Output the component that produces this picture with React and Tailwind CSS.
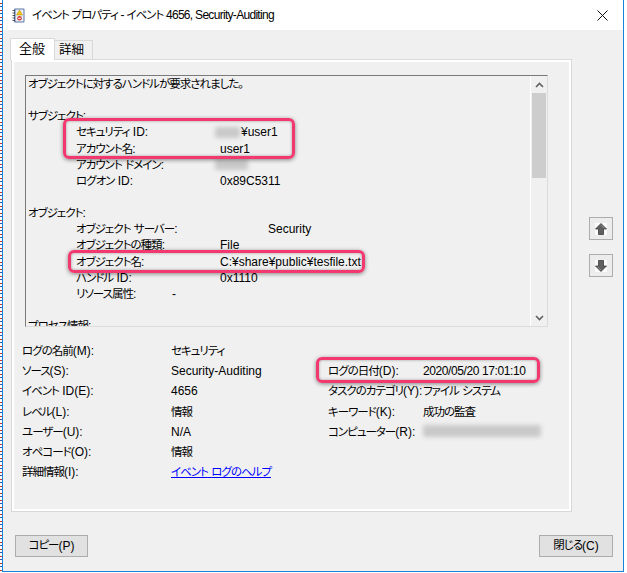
import React from "react";

const CJK = /([\u3000-\u30ff\u4e00-\u9fff\uff00-\uff5e]+)/;

const T = ({ s }) => {
  if (typeof s !== "string") return s;
  const parts = s.split(CJK);
  return (
    <>
      {parts.map((p, i) =>
        i % 2 === 1 ? (
          <span key={i} className="text-[11.5px] tracking-[-1px]">{p}</span>
        ) : (
          <span key={i}>{p}</span>
        )
      )}
    </>
  );
};

const Ln = ({ children }) => (
  <div className="h-[16.15px] leading-[16.15px] whitespace-nowrap flex items-center">
    <T s={children} />
  </div>
);

const Item = ({ label, lw = 144, children }) => (
  <div className="h-[16.15px] leading-[16.15px] whitespace-nowrap flex items-center">
    <span className="w-[48px] shrink-0" />
    <span className="shrink-0" style={{ width: lw }}><T s={label} /></span>
    <span className="flex items-center"><T s={children} /></span>
  </div>
);

const Blur = ({ cls }) => <span className={`inline-block bg-[#c9c9c9] blur-[2px] rounded-[2px] ${cls}`} />;

const Row = ({ a, b, c, d }) => (
  <>
    <div className="whitespace-nowrap"><T s={a} /></div>
    <div className="whitespace-nowrap"><T s={b} /></div>
    <div className="whitespace-nowrap"><T s={c} /></div>
    <div className="whitespace-nowrap"><T s={d} /></div>
  </>
);

const BlockArrow = ({ down }) => (
  <svg width="14" height="14" viewBox="0 0 14 14" className={down ? "rotate-180" : ""}>
    <rect x="1" y="1" width="12" height="12" fill="#fbfbfb" />
    <path d="M7 1.5 L12.5 7 L9.5 7 L9.5 12.5 L4.5 12.5 L4.5 7 L1.5 7 Z" fill="#5f5f5f" stroke="#3c3c3c" strokeWidth="0.8" />
    <path d="M7 2.8 L10.5 6.3" stroke="#9a9a9a" strokeWidth="0.8" />
  </svg>
);

export default function App() {
  return (
    <div className="relative w-[627px] h-[573px] bg-white overflow-hidden text-[12px] text-black font-['Liberation_Sans','Noto_Sans_CJK_JP',sans-serif] [font-feature-settings:'palt']">
      <div className="flex h-[572px]">
        <div className="w-[2px] h-full bg-[repeating-linear-gradient(180deg,#ffffff_0px,#ffffff_3px,#c0392b_3px,#c0392b_4px,#ffffff_4px,#ffffff_6px,#3455a8_6px,#3455a8_7px)]" />
        <div className="w-[622px] h-full flex flex-col border-l border-r border-b border-[#1883d7]">
          {/* title bar */}
          <div className="h-[30px] bg-white flex items-center pl-[9px] pr-[6px] shrink-0">
            <svg width="13" height="15" viewBox="0 0 13 15" className="shrink-0">
              <rect x="2" y="0.5" width="10.5" height="14" rx="1" fill="#5d77a6" />
              <rect x="3.5" y="1.5" width="8" height="12" fill="#e9eef7" />
              <path d="M7.5 2 L10.5 7 L4.5 7 Z" fill="#f3c212" stroke="#b88a00" strokeWidth="0.5" />
              <circle cx="7.5" cy="10.3" r="2.3" fill="#d33a2f" />
              <rect x="6.2" y="9.8" width="2.6" height="1" fill="#fff" />
              <g stroke="#333" strokeWidth="0.8">
                <line x1="0.5" y1="2.5" x2="3" y2="2.5" />
                <line x1="0.5" y1="5" x2="3" y2="5" />
                <line x1="0.5" y1="7.5" x2="3" y2="7.5" />
                <line x1="0.5" y1="10" x2="3" y2="10" />
                <line x1="0.5" y1="12.5" x2="3" y2="12.5" />
              </g>
            </svg>
            <div className="ml-[7px] text-[12px] tracking-[-0.7px] whitespace-nowrap"><T s="イベント プロパティ - イベント 4656, Security-Auditing" /></div>
            <div className="ml-auto w-[30px] h-[30px] flex items-center justify-center">
              <svg width="11" height="11" viewBox="0 0 11 11">
                <path d="M0.5 0.5 L10.5 10.5 M10.5 0.5 L0.5 10.5" stroke="#111" strokeWidth="1" />
              </svg>
            </div>
          </div>

          {/* body */}
          <div className="flex-1 bg-[#f0f0f0] flex flex-col">
            <div className="flex">
              <div className="flex flex-col">
                {/* tabs */}
                <div className="relative z-10 flex items-end h-[22px] mt-[8px] ml-[7px]">
                  <div className="h-[22px] w-[45px] bg-white border-t border-l border-r border-[#d9d9d9] flex items-center pl-[8px] pb-[1px] text-[13px]">全般</div>
                  <div className="h-[20px] w-[38px] bg-[#f0f0f0] border-t border-r border-b border-[#d9d9d9] flex items-center pl-[4px] text-[12.5px]">詳細</div>
                </div>
                {/* panel */}
                <div className="-mt-px ml-[8px] w-[561px] h-[453px] border border-[#d9d9d9]">
                  <div className="w-full h-full border-2 border-white flex flex-col">
                    {/* edit box */}
                    <div className="mt-[13px] ml-[11px] w-[523px] h-[252px] border-t border-l border-[#7a7a7a] border-r border-b border-r-[#dcdcdc] border-b-[#dcdcdc] flex">
                      <div className="flex-1 overflow-hidden pl-[2px]">
                        <Ln>オブジェクトに対するハンドルが要求されました。</Ln>
                        <Ln>&nbsp;</Ln>
                        <Ln>サブジェクト:</Ln>
                        <Item label="セキュリティ ID:" lw={139}><Blur cls="w-[25px] h-[11px]" /><span className="ml-[1px]">¥user1</span></Item>
                        <Item label="アカウント名:">user1</Item>
                        <Item label="アカウント ドメイン:" lw={139}><Blur cls="w-[33px] h-[11px]" /></Item>
                        <Item label="ログオン ID:">0x89C5311</Item>
                        <Ln>&nbsp;</Ln>
                        <Ln>オブジェクト:</Ln>
                        <Item label="オブジェクト サーバー:" lw={192}>Security</Item>
                        <Item label="オブジェクトの種類:">File</Item>
                        <Item label="オブジェクト名:">C:¥share¥public¥tesfile.txt</Item>
                        <Item label="ハンドル ID:">0x1110</Item>
                        <Item label="リソース属性:" lw={96}>-</Item>
                        <Ln>&nbsp;</Ln>
                        <Ln>プロセス情報:</Ln>
                      </div>
                      {/* scrollbar */}
                      <div className="w-[17px] h-full border-l border-white bg-[#f0f0f0] flex flex-col">
                        <div className="h-[17px] flex items-center justify-center">
                          <svg width="9" height="6" viewBox="0 0 9 6"><path d="M1 5 L4.5 1.5 L8 5" fill="none" stroke="#606060" strokeWidth="1.6" /></svg>
                        </div>
                        <div className="h-[85px] mx-[1px] bg-[#cdcdcd]" />
                        <div className="flex-1" />
                        <div className="h-[17px] flex items-center justify-center">
                          <svg width="9" height="6" viewBox="0 0 9 6"><path d="M1 1 L4.5 4.5 L8 1" fill="none" stroke="#606060" strokeWidth="1.6" /></svg>
                        </div>
                      </div>
                    </div>

                    {/* fields */}
                    <div className="mt-[14px] pl-[8px] grid grid-cols-[149px_157px_95px_1fr] auto-rows-[20.2px] items-center">
                      <Row a="ログの名前(M):" b="セキュリティ" c="" d="" />
                      <Row a="ソース(S):" b="Security-Auditing" c="ログの日付(D):" d={<span className="tracking-[-0.4px]">2020/05/20 17:01:10</span>} />
                      <Row a="イベント ID(E):" b="4656" c="タスクのカテゴリ(Y):" d="ファイル システム" />
                      <Row a="レベル(L):" b="情報" c="キーワード(K):" d="成功の監査" />
                      <Row a="ユーザー(U):" b="N/A" c="コンピューター(R):" d={<Blur cls="w-[118px] h-[12px] mt-[3px]" />} />
                      <Row a="オペコード(O):" b="情報" c="" d="" />
                      <Row a="詳細情報(I):" b={<span className="text-[#0000ff] underline"><T s="イベント ログのヘルプ" /></span>} c="" d="" />
                    </div>
                  </div>
                </div>
              </div>
              {/* side arrows */}
              <div className="ml-[17px] mt-[187px] flex flex-col gap-[14px]">
                <div className="w-[24px] h-[23px] border border-[#adadad] bg-[#ececec] flex items-center justify-center"><BlockArrow /></div>
                <div className="w-[24px] h-[23px] border border-[#adadad] bg-[#ececec] flex items-center justify-center"><BlockArrow down /></div>
              </div>
            </div>
            {/* bottom buttons */}
            <div className="mt-[23px] pl-[12px] pr-[10px] flex justify-between">
              <div className="w-[73px] h-[22px] border border-[#adadad] bg-[#e1e1e1] flex items-center justify-center"><T s="コピー(P)" /></div>
              <div className="w-[74px] h-[22px] border border-[#adadad] bg-[#e1e1e1] flex items-center justify-center"><T s="閉じる(C)" /></div>
            </div>
          </div>
        </div>
      </div>

      {/* highlight overlays */}
      <div className="absolute left-[63px] top-[118px] w-[232px] h-[41px] rounded-[6px] border-[3px] border-[#f2386f] shadow-[0_1px_4px_rgba(0,0,0,0.45),inset_0_0_3px_rgba(0,0,0,0.35)]" />
      <div className="absolute left-[68px] top-[250px] w-[297px] h-[23px] rounded-[6px] border-[3px] border-[#f2386f] shadow-[0_1px_4px_rgba(0,0,0,0.45),inset_0_0_3px_rgba(0,0,0,0.35)]" />
      <div className="absolute left-[316px] top-[357px] w-[224px] h-[26px] rounded-[6px] border-[3px] border-[#f2386f] shadow-[0_1px_4px_rgba(0,0,0,0.45),inset_0_0_3px_rgba(0,0,0,0.35)]" />
    </div>
  );
}
